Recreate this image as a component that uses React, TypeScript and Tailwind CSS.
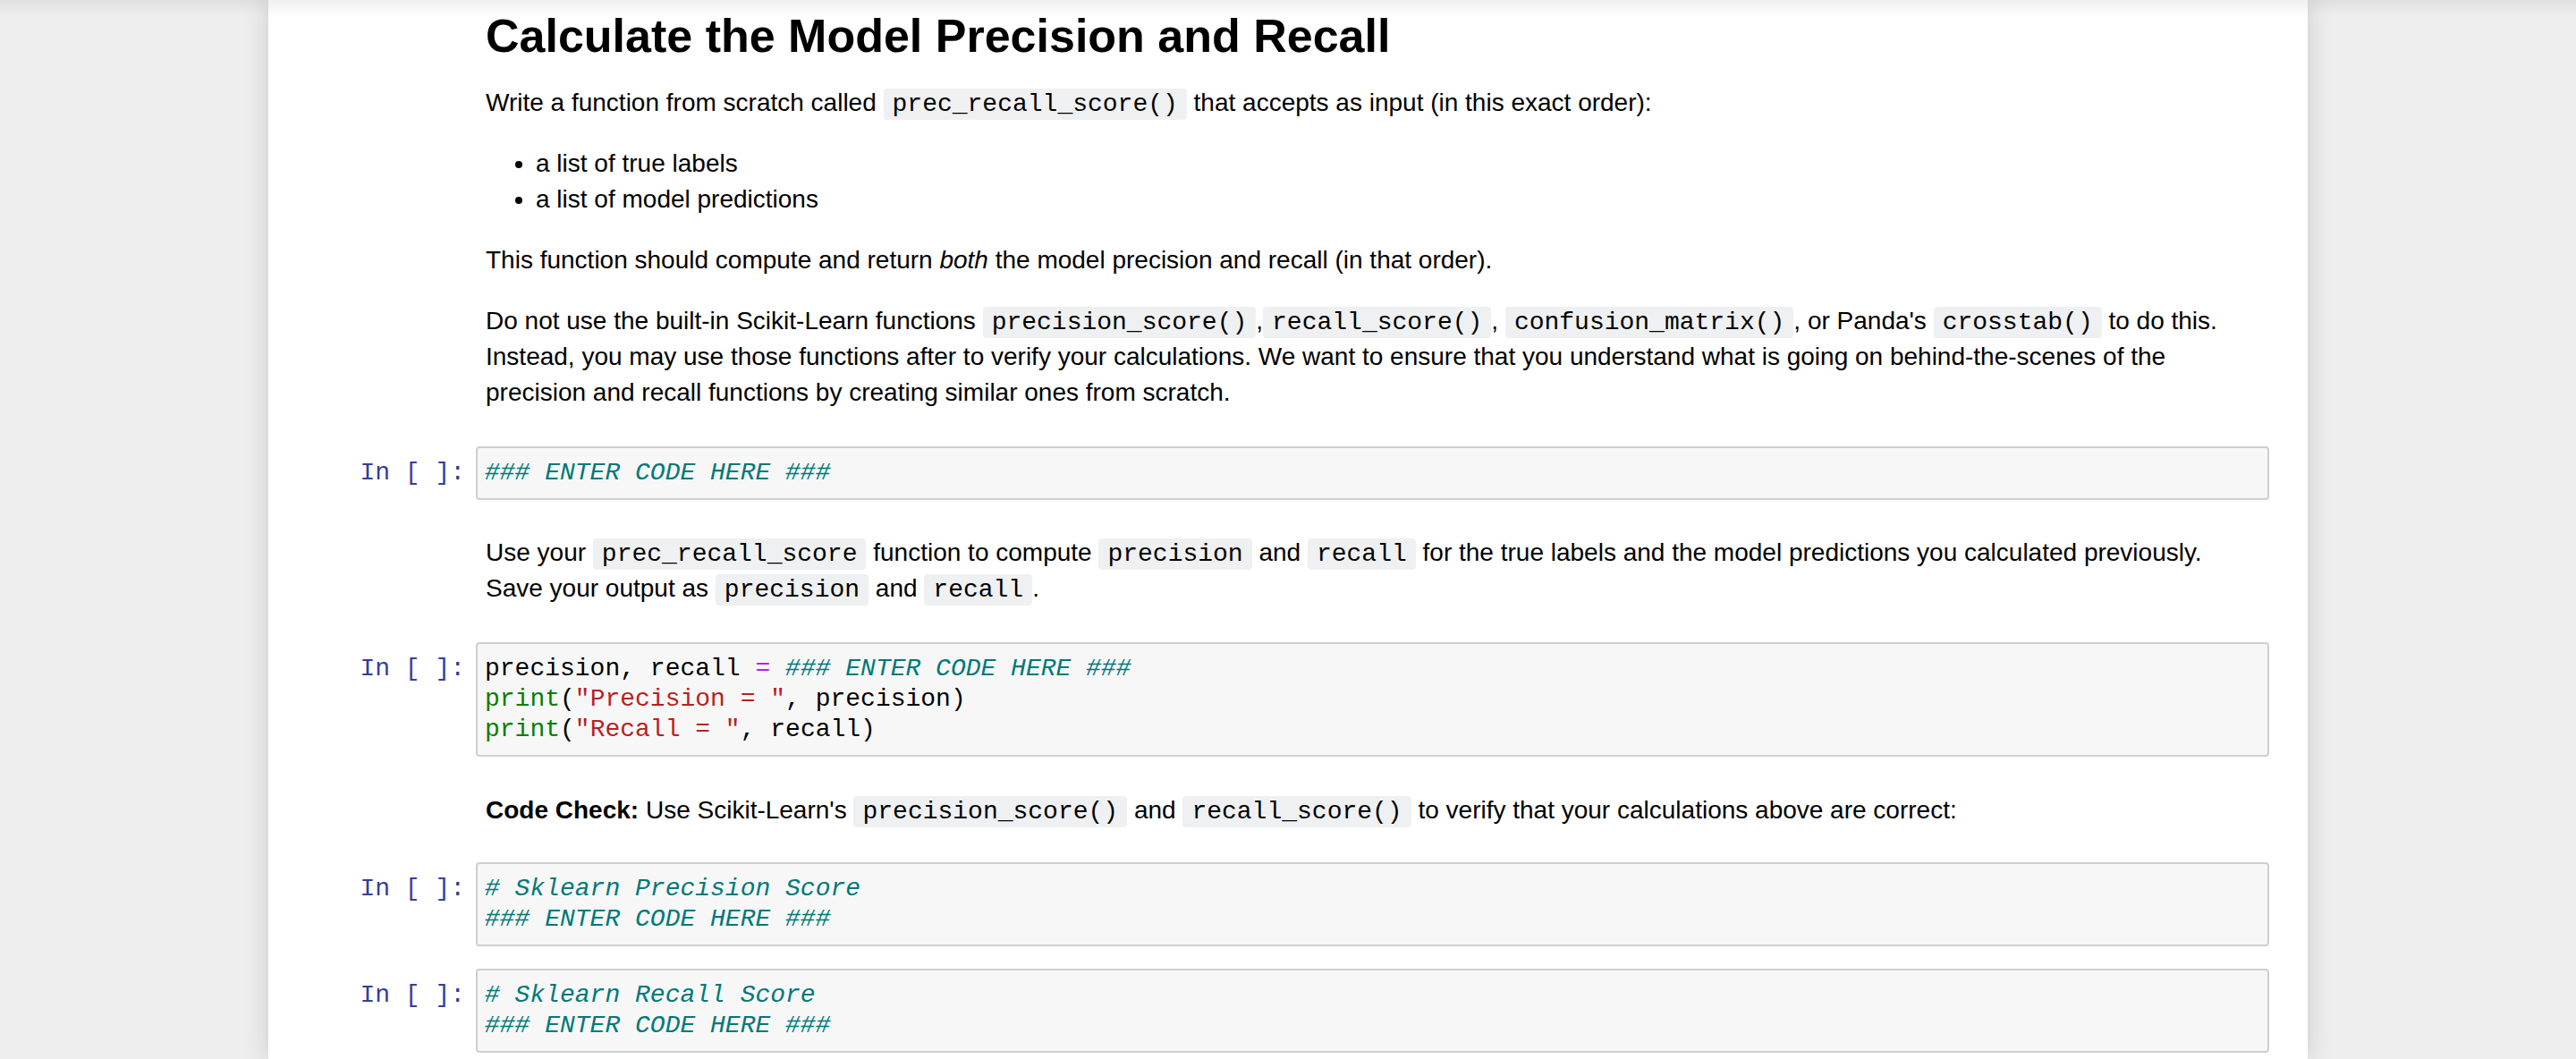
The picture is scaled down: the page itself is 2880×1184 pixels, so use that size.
import React from 'react';

const sans = "font-['Liberation_Sans',Arial,sans-serif]";
const mono = "font-['Liberation_Mono','Courier_New',monospace]";

function C({ children }: { children: React.ReactNode }) {
  return (
    <code className={`${mono} rounded-[4px] bg-[#eff0f1] px-[10px] py-[2px] text-[28px] leading-[28px] text-black`}>
      {children}
    </code>
  );
}

function Md({ className = '', children }: { className?: string; children: React.ReactNode }) {
  return (
    <div className={`flex ${className}`}>
      <div className="w-[222px] shrink-0" />
      <div className="pl-[11px] whitespace-nowrap">{children}</div>
    </div>
  );
}

function CodeCell({ className = '', children }: { className?: string; children: React.ReactNode }) {
  return (
    <div className={`flex ${className}`}>
      <div
        className={`${mono} w-[222px] shrink-0 whitespace-pre pr-[12px] pt-[13px] text-right text-[28px] leading-[34px] text-[#303f9f]`}
      >
        In [ ]:
      </div>
      <div
        className={`${mono} flex-1 whitespace-pre rounded-[4px] border-2 border-[#cfcfcf] bg-[#f7f7f7] px-[8px] py-[11px] text-[28px] leading-[34px] text-black`}
      >
        {children}
      </div>
    </div>
  );
}

const Cm = ({ children }: { children: React.ReactNode }) => (
  <span className="italic text-[#007979]">{children}</span>
);

export default function App() {
  return (
    <div className={`${sans} relative h-[1184px] overflow-hidden bg-[#eeeeee]`}>
      <div className="pointer-events-none absolute inset-x-0 top-0 z-10 h-[18px] bg-gradient-to-b from-black/[0.06] to-transparent" />
      <div className="mx-auto h-full w-[2280px] bg-white pl-[10px] pr-[43px] text-[28px] leading-[40px] text-black shadow-[0_0_24px_2px_rgba(87,87,87,0.2)]">
        <Md className="pt-[14px]">
          <h1 className="text-[52px] font-bold leading-[52px]">Calculate the Model Precision and Recall</h1>
        </Md>

        <Md className="mt-[29px]">
          <p>
            Write a function from scratch called <C>prec_recall_score()</C> that accepts as input (in this exact order):
          </p>
        </Md>

        <Md className="mt-[28px]">
          <ul className="list-disc pl-[56px]">
            <li>a list of true labels</li>
            <li>a list of model predictions</li>
          </ul>
        </Md>

        <Md className="mt-[28px]">
          <p>
            This function should compute and return <em>both</em> the model precision and recall (in that order).
          </p>
        </Md>

        <Md className="mt-[28px]">
          <p>
            Do not use the built-in Scikit-Learn functions <C>precision_score()</C>,<C>recall_score()</C>,{' '}
            <C>confusion_matrix()</C>, or Panda's <C>crosstab()</C> to do this.
            <br />
            Instead, you may use those functions after to verify your calculations. We want to ensure that you
            understand what is going on behind-the-scenes of the
            <br />
            precision and recall functions by creating similar ones from scratch.
          </p>
        </Md>

        <CodeCell className="mt-[40px]">
          <Cm>### ENTER CODE HERE ###</Cm>
        </CodeCell>

        <Md className="mt-[39px]">
          <p>
            Use your <C>prec_recall_score</C> function to compute <C>precision</C> and <C>recall</C> for the true
            labels and the model predictions you calculated previously.
            <br />
            Save your output as <C>precision</C> and <C>recall</C>.
          </p>
        </Md>

        <CodeCell className="mt-[40px]">
          {'precision, recall '}
          <span className="text-[#aa22ff]">=</span> <Cm>### ENTER CODE HERE ###</Cm>
          {'\n'}
          <span className="text-[#008000]">print</span>(<span className="text-[#ba2121]">"Precision = "</span>
          {', precision)\n'}
          <span className="text-[#008000]">print</span>(<span className="text-[#ba2121]">"Recall = "</span>
          {', recall)'}
        </CodeCell>

        <Md className="mt-[40px]">
          <p>
            <strong>Code Check:</strong> Use Scikit-Learn's <C>precision_score()</C> and <C>recall_score()</C> to
            verify that your calculations above are correct:
          </p>
        </Md>

        <CodeCell className="mt-[38px]">
          <Cm>{'# Sklearn Precision Score\n### ENTER CODE HERE ###'}</Cm>
        </CodeCell>

        <CodeCell className="mt-[25px]">
          <Cm>{'# Sklearn Recall Score\n### ENTER CODE HERE ###'}</Cm>
        </CodeCell>
      </div>
    </div>
  );
}
